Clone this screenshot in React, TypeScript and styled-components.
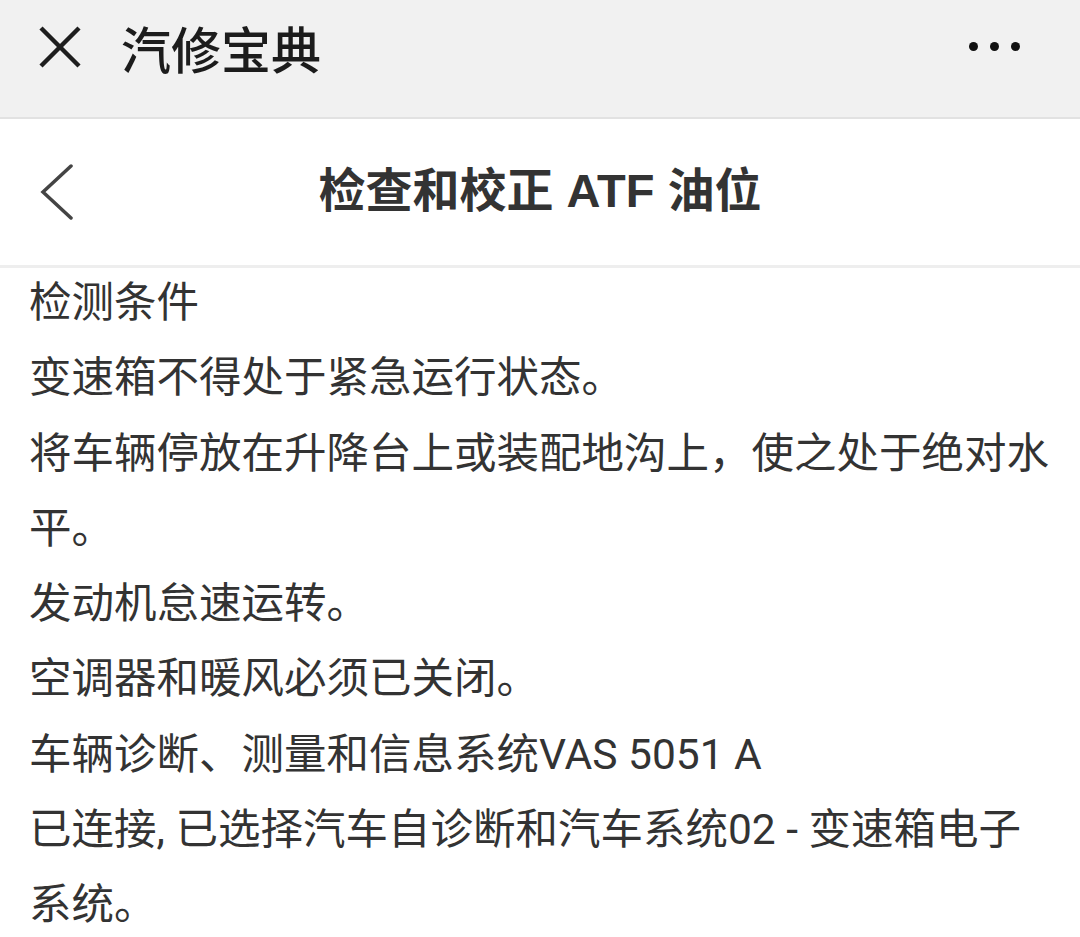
import React from 'react';
import styled, { createGlobalStyle } from 'styled-components';

const GlobalStyle = createGlobalStyle`
  html, body {
    margin: 0;
    padding: 0;
    background: #ffffff;
  }
  body {
    font-family: Roboto, "Noto Sans CJK SC", sans-serif;
  }
`;

const lines = [
  '检测条件',
  '变速箱不得处于紧急运行状态。',
  '将车辆停放在升降台上或装配地沟上，使之处于绝对水平。',
  '发动机怠速运转。',
  '空调器和暖风必须已关闭。',
  '车辆诊断、测量和信息系统VAS 5051 A',
  '已连接, 已选择汽车自诊断和汽车系统02 - 变速箱电子系统。',
];

export default function App() {
  return (
    <Root>
      <GlobalStyle />
      <TopBar>
        <CloseIcon viewBox="0 0 42 42">
          <line x1="2" y1="2" x2="40" y2="40" />
          <line x1="40" y1="2" x2="2" y2="40" />
        </CloseIcon>
        <AppTitle>汽修宝典</AppTitle>
        <MoreButton>
          <Dot />
          <Dot />
          <Dot />
        </MoreButton>
      </TopBar>
      <Header>
        <BackIcon viewBox="0 0 34 56">
          <polyline points="31,2 3,28 31,54" />
        </BackIcon>
        <PageTitle>检查和校正 ATF 油位</PageTitle>
        <span />
      </Header>
      <Content>
        {lines.map((text) => (
          <Paragraph key={text}>{text}</Paragraph>
        ))}
      </Content>
    </Root>
  );
}

const Root = styled.div`
  width: 1080px;
  min-height: 937px;
  background: #ffffff;
  overflow: hidden;
`;

const TopBar = styled.div`
  height: 119px;
  display: flex;
  align-items: center;
  padding: 0 60px 24px 39px;
  box-sizing: border-box;
  background: #f1f1f1;
  border-bottom: 2px solid #e2e2e2;
`;

const CloseIcon = styled.svg`
  width: 42px;
  height: 42px;
  stroke: #1e1e1e;
  stroke-width: 4.5;
  stroke-linecap: butt;
  margin-right: 40px;
`;

const AppTitle = styled.span`
  flex: 1;
  font-family: "Noto Sans CJK SC", sans-serif;
  font-size: 50px;
  font-weight: 500;
  color: #1c1c1c;
  line-height: 1;
`;

const MoreButton = styled.div`
  display: flex;
  gap: 12px;
  align-items: center;
`;

const Dot = styled.span`
  width: 9px;
  height: 9px;
  border-radius: 50%;
  background: #111111;
`;

const Header = styled.div`
  height: 149px;
  box-sizing: border-box;
  display: grid;
  grid-template-columns: 1fr auto 1fr;
  align-items: center;
  padding: 0 40px;
  background: #ffffff;
  border-bottom: 3px solid #eeeeee;
`;

const BackIcon = styled.svg`
  width: 34px;
  height: 56px;
  fill: none;
  stroke: #444444;
  stroke-width: 3.5;
  stroke-linecap: round;
  stroke-linejoin: miter;
`;

const PageTitle = styled.h1`
  margin: 0 0 4px;
  font-family: "Liberation Sans", "Noto Sans CJK SC", sans-serif;
  font-size: 47px;
  font-weight: 700;
  color: #333333;
  line-height: 1;
  white-space: nowrap;
`;

const Content = styled.div`
  margin-top: -3px;
  padding: 0 29px;
`;

const Paragraph = styled.p`
  margin: 0;
  font-size: 42.5px;
  line-height: 75.3px;
  color: #333333;
`;
